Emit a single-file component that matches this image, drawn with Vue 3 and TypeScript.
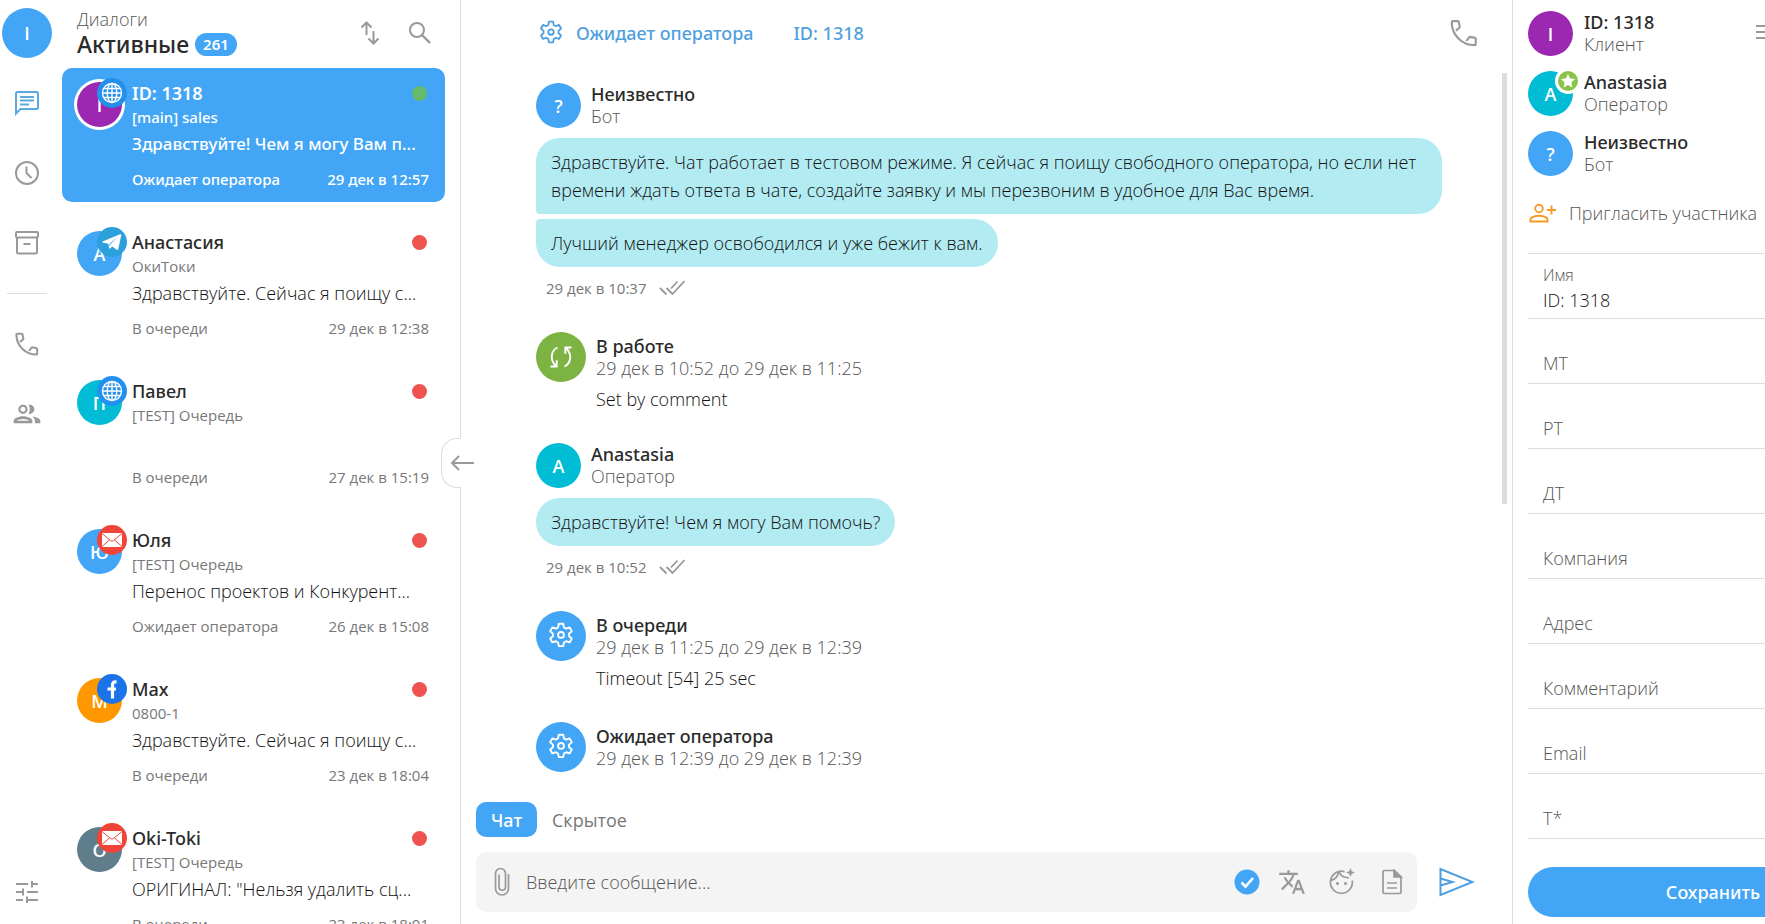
<script setup lang="ts">
import { ref } from 'vue'

type Channel = 'web' | 'telegram' | 'mail' | 'facebook'

interface Dialog {
  id: number
  name: string
  letter: string
  color: string
  channel: Channel
  queue: string
  message: string
  status: string
  time: string
  online?: boolean
}

const dialogs: Dialog[] = [
  { id: 1, name: 'ID: 1318', letter: 'I', color: '#9c27b0', channel: 'web', queue: '[main] sales', message: 'Здравствуйте! Чем я могу Вам п...', status: 'Ожидает оператора', time: '29 дек в 12:57', online: true },
  { id: 2, name: 'Анастасия', letter: 'А', color: '#42a5f5', channel: 'telegram', queue: 'ОкиТоки', message: 'Здравствуйте. Сейчас я поищу с...', status: 'В очереди', time: '29 дек в 12:38' },
  { id: 3, name: 'Павел', letter: 'П', color: '#00bcd4', channel: 'web', queue: '[TEST] Очередь', message: '', status: 'В очереди', time: '27 дек в 15:19' },
  { id: 4, name: 'Юля', letter: 'Ю', color: '#42a5f5', channel: 'mail', queue: '[TEST] Очередь', message: 'Перенос проектов и Конкурент...', status: 'Ожидает оператора', time: '26 дек в 15:08' },
  { id: 5, name: 'Max', letter: 'M', color: '#ff9800', channel: 'facebook', queue: '0800-1', message: 'Здравствуйте. Сейчас я поищу с...', status: 'В очереди', time: '23 дек в 18:04' },
  { id: 6, name: 'Oki-Toki', letter: 'O', color: '#607d8b', channel: 'mail', queue: '[TEST] Очередь', message: 'ОРИГИНАЛ: "Нельзя удалить сц...', status: 'В очереди', time: '23 дек в 18:01' },
]

interface Talk {
  kind: 'talk'
  name: string
  role: string
  letter: string
  color: string
  texts: string[]
  time: string
}

interface Status {
  kind: 'status'
  name: string
  period: string
  comment?: string
  working?: boolean
}

const feed: (Talk | Status)[] = [
  {
    kind: 'talk', name: 'Неизвестно', role: 'Бот', letter: '?', color: '#42a5f5', time: '29 дек в 10:37',
    texts: [
      'Здравствуйте. Чат работает в тестовом режиме. Я сейчас я поищу свободного оператора, но если нет времени ждать ответа в чате, создайте заявку и мы перезвоним в удобное для Вас время.',
      'Лучший менеджер освободился и уже бежит к вам.',
    ],
  },
  { kind: 'status', name: 'В работе', period: '29 дек в 10:52 до 29 дек в 11:25', comment: 'Set by comment', working: true },
  { kind: 'talk', name: 'Anastasia', role: 'Оператор', letter: 'A', color: '#00bcd4', time: '29 дек в 10:52', texts: ['Здравствуйте! Чем я могу Вам помочь?'] },
  { kind: 'status', name: 'В очереди', period: '29 дек в 11:25 до 29 дек в 12:39', comment: 'Timeout [54] 25 sec' },
  { kind: 'status', name: 'Ожидает оператора', period: '29 дек в 12:39 до 29 дек в 12:39' },
]

const members = [
  { name: 'ID: 1318', role: 'Клиент', letter: 'I', color: '#9c27b0', star: false },
  { name: 'Anastasia', role: 'Оператор', letter: 'A', color: '#00bcd4', star: true },
  { name: 'Неизвестно', role: 'Бот', letter: '?', color: '#42a5f5', star: false },
]

const fields = ref([
  { key: 'name', label: 'Имя', value: 'ID: 1318' },
  { key: 'mt', label: 'МТ', value: '' },
  { key: 'rt', label: 'РТ', value: '' },
  { key: 'dt', label: 'ДТ', value: '' },
  { key: 'company', label: 'Компания', value: '' },
  { key: 'address', label: 'Адрес', value: '' },
  { key: 'comment', label: 'Комментарий', value: '' },
  { key: 'email', label: 'Email', value: '' },
  { key: 't', label: 'Т*', value: '' },
])

const activeId = ref(1)
const draft = ref('')
const mode = ref<'chat' | 'hidden'>('chat')

const gearPath =
  'M10.1 1.5h3.8l.6 3.1 1.9 1.1 3-1.1 1.9 3.3-2.4 2.1v2.2l2.4 2-1.9 3.3-3-1-1.9 1.1-.6 3.1h-3.8l-.6-3.1-1.9-1.1-3 1-1.9-3.3 2.4-2V10L2.7 7.900l1.900-3.300 3 1.100 1.900-1.100z'
const phonePath =
  'M5.500 10.100 8.300 7.800c.3-.3.4-.5.3-.8L7.800 3.100c-.1-.4-.4-.6-.7-.6H3c-.5 0-.8.4-.8.8 0 10.200 8.200 18.400 18.400 18.400.5 0 .8-.3.8-.8v-4.200c0-.4-.2-.7-.6-.8l-3.800-.8c-.3 0-.6.1-.8.3l-2.300 2.900'
</script>

<template>
  <div class="app">
    <nav class="rail" aria-label="Разделы">
      <button class="me" aria-label="Профиль">I</button>
      <button class="rail-btn on" aria-label="Диалоги">
        <svg width="26" height="26" viewBox="0 0 26 26" fill="none" stroke="currentColor" stroke-width="2">
          <path d="M2 23.500V3.500A1.500 1.500 0 0 1 3.500 2h19A1.500 1.500 0 0 1 24 3.500v14a1.500 1.500 0 0 1-1.500 1.500H6.500z" />
          <path d="M6 7h14M6 10.500h14M6 14.500h9" stroke-width="1.800" />
        </svg>
      </button>
      <button class="rail-btn" aria-label="История">
        <svg width="26" height="26" viewBox="0 0 26 26" fill="none" stroke="currentColor" stroke-width="2">
          <circle cx="13" cy="13" r="11" /><path d="M12.500 6.500v6.500l5 5" />
        </svg>
      </button>
      <button class="rail-btn" aria-label="Архив">
        <svg width="26" height="26" viewBox="0 0 26 26" fill="none" stroke="currentColor" stroke-width="2">
          <rect x="2" y="2" width="22" height="5.500" rx="1" /><path d="M3 7.500V22a1.500 1.500 0 0 0 1.500 1.500h17A1.500 1.500 0 0 0 23 22V7.500M9.500 14h7" />
        </svg>
      </button>
      <hr class="rail-line" />
      <button class="rail-btn" aria-label="Звонки">
        <svg width="26" height="26" viewBox="0 0 24 24" fill="none" stroke="currentColor" stroke-width="1.900"><path :d="phonePath" /></svg>
      </button>
      <button class="rail-btn" aria-label="Контакты">
        <svg width="32" height="32" viewBox="0 0 24 24" fill="currentColor">
          <path d="M9 13.750c-2.340 0-7 1.170-7 3.500V19h14v-1.750c0-2.330-4.660-3.500-7-3.500zM4.340 17c.84-.58 2.870-1.250 4.660-1.250s3.820.67 4.660 1.250H4.340zM9 12c1.930 0 3.500-1.570 3.500-3.500S10.930 5 9 5 5.500 6.570 5.500 8.500 7.070 12 9 12zm0-5.400c1 0 1.900.9 1.900 1.900S10 10.400 9 10.400 7.100 9.500 7.100 8.500 8 6.600 9 6.600zm7.040 7.210c1.160.84 1.960 1.960 1.960 3.440V19h4v-1.750c0-2.020-3.500-3.170-5.960-3.440zM14 12c1.930 0 3.500-1.570 3.500-3.500S15.930 5 14 5c-.34 0-.64.03-.9.150.63.89 1 2.180 1 3.350s-.37 2.460-1 3.350c.26.120.56.150.9.150z" />
        </svg>
      </button>
      <button class="rail-btn last" aria-label="Настройки">
        <svg width="24" height="24" viewBox="0 0 24 24" fill="none" stroke="currentColor" stroke-width="2">
          <path d="M1 4h12M17 1v6.500M17 4h6M1 12h7M8 8.500V15.500M12 12h11M1 20h7M12 16.500V23M12 20h11" />
        </svg>
      </button>
    </nav>

    <section class="list">
      <header class="list-head">
        <div class="list-title">
          <p>Диалоги</p>
          <h1>Активные <span class="count">261</span></h1>
        </div>
        <button class="tool" aria-label="Сортировка">
          <svg width="20" height="26" viewBox="0 0 20 26" fill="none" stroke="currentColor" stroke-width="2">
            <path d="M6.500 15V3M1.500 7.500l5-5 5 5M13.500 11v12M8.500 18.500l5 5 5-5" />
          </svg>
        </button>
        <button class="tool" aria-label="Поиск">
          <svg width="24" height="24" viewBox="0 0 24 24" fill="none" stroke="currentColor" stroke-width="2">
            <circle cx="9" cy="9" r="7" /><path d="m14 14 8 8" stroke-width="2.400" />
          </svg>
        </button>
      </header>

      <ul class="dialogs">
        <li v-for="d in dialogs" :key="d.id">
          <button class="dialog" :class="{ active: d.id === activeId }" @click="activeId = d.id">
            <span class="avatar" :style="{ background: d.color }">
              {{ d.letter }}
              <span class="badge" :class="d.channel">
                <svg v-if="d.channel === 'web'" width="22" height="22" viewBox="0 0 22 22" fill="none" stroke="#fff" stroke-width="1.400">
                  <circle cx="11" cy="11" r="9.500" /><ellipse cx="11" cy="11" rx="4.800" ry="9.500" /><path d="M11 1.500v19M1.500 11h19M3 6.500h16M3 15.500h16" />
                </svg>
                <svg v-else-if="d.channel === 'telegram'" width="22" height="22" viewBox="0 0 22 22" fill="#fff">
                  <path d="M1.500 10.600 19 3.300c.9-.3 1.400.2 1.200 1.200L17.300 18c-.2 1-.8 1.200-1.600.7l-4.500-3.300-2.200 2.100c-.4.4-.8.3-.8-.2l-.8-4.600-5.700-1.200c-.9-.2-.9-.6-.2-.9zm7 2.100.3 3.200.7-2.800 7.500-7.700z" />
                </svg>
                <svg v-else-if="d.channel === 'mail'" width="20" height="14" viewBox="0 0 20 14">
                  <rect width="20" height="14" fill="#fff" /><path d="m0 .5 8.500 7q1.500 1.200 3 0l8.500-7M0 13.500 7.500 7M20 13.500 12.500 7" fill="none" stroke="#f04438" />
                </svg>
                <svg v-else width="22" height="22" viewBox="0 0 22 22" fill="none" stroke="#fff" stroke-width="3.200">
                  <path d="M15.500 3.800h-1.300a2.700 2.700 0 0 0-2.700 2.700V20.500M6.500 11h8.500" />
                </svg>
              </span>
            </span>
            <span class="dialog-body">
              <span class="dialog-row"><b class="name">{{ d.name }}</b><i class="dot" :class="{ online: d.online }"></i></span>
              <span class="queue">{{ d.queue }}</span>
              <span class="preview">{{ d.message }}</span>
              <span class="dialog-row meta"><span>{{ d.status }}</span><span>{{ d.time }}</span></span>
            </span>
          </button>
        </li>
      </ul>
    </section>

    <main class="chat">
      <button class="collapse" aria-label="Свернуть список">
        <svg width="24" height="16" viewBox="0 0 24 16" fill="none" stroke="currentColor" stroke-width="2"><path d="M24 8H2M9 1 2 8l7 7" /></svg>
      </button>

      <header class="chat-head">
        <svg width="26" height="26" viewBox="0 0 24 24" fill="none" stroke="currentColor" stroke-width="1.700" stroke-linejoin="round">
          <path :d="gearPath" /><circle cx="12" cy="11.100" r="2.500" />
        </svg>
        <span class="chat-status">Ожидает оператора</span>
        <span>ID: 1318</span>
        <button class="tool call" aria-label="Позвонить">
          <svg width="30" height="30" viewBox="0 0 24 24" fill="none" stroke="currentColor" stroke-width="1.700"><path :d="phonePath" /></svg>
        </button>
      </header>

      <div class="feed-wrap">
        <div class="feed">
          <template v-for="(item, i) in feed" :key="i">
            <article v-if="item.kind === 'talk'">
              <div class="person">
                <span class="avatar" :style="{ background: item.color }">{{ item.letter }}</span>
                <div><b class="name">{{ item.name }}</b><span class="role">{{ item.role }}</span></div>
              </div>
              <div class="bubbles"><p v-for="t in item.texts" :key="t" class="bubble">{{ t }}</p></div>
              <p class="sent">
                {{ item.time }}
                <svg width="26" height="16" viewBox="0 0 26 16" fill="none" stroke="currentColor" stroke-width="1.800">
                  <path d="m1 8 6.500 6.500M7.500 8l6 6L25.500 1M12 8.500 18.500 1.500" />
                </svg>
              </p>
            </article>
            <article v-else class="status">
              <span class="status-icon" :class="{ working: item.working }">
                <svg v-if="item.working" width="24" height="24" viewBox="0 0 24 24" fill="none" stroke="#fff" stroke-width="1.900">
                  <path d="M8.500 2.500C1.500 6 .8 15 7 21M1.500 21.500h6.200v-6.200M15.500 21.500c7-3.500 7.700-12.500 1.500-18.500M22.500 2.500h-6.200v6.200" />
                </svg>
                <svg v-else width="28" height="28" viewBox="0 0 24 24" fill="none" stroke="#fff" stroke-width="1.600" stroke-linejoin="round">
                  <path :d="gearPath" /><circle cx="12" cy="11.100" r="2.500" />
                </svg>
              </span>
              <div class="status-text">
                <b class="name">{{ item.name }}</b>
                <span class="role">{{ item.period }}</span>
                <p v-if="item.comment">{{ item.comment }}</p>
              </div>
            </article>
          </template>
        </div>
        <i class="thumb"></i>
      </div>

      <div class="tabs">
        <button :class="{ on: mode === 'chat' }" @click="mode = 'chat'">Чат</button>
        <button :class="{ on: mode === 'hidden' }" @click="mode = 'hidden'">Скрытое</button>
      </div>

      <form class="composer" @submit.prevent>
        <div class="box">
          <button type="button" class="tool" aria-label="Прикрепить файл">
            <svg width="16" height="30" viewBox="0 0 16 30" fill="none" stroke="currentColor" stroke-width="1.700">
              <path d="M14.500 7v14.500a6.500 6.500 0 0 1-13 0V6.500a5 5 0 0 1 10 0V20a3 3 0 0 1-6.500 0V7.500" />
            </svg>
          </button>
          <input v-model="draft" type="text" placeholder="Введите сообщение..." aria-label="Введите сообщение" />
          <button type="button" class="tool check" aria-label="Проверка">
            <svg width="26" height="26" viewBox="0 0 26 26"><circle cx="13" cy="13" r="12.500" fill="#42a5f5" /><path d="m7.500 13.500 4 4 7.500-8.500" fill="none" stroke="#fff" stroke-width="2.600" /></svg>
          </button>
          <button type="button" class="tool" aria-label="Перевод">
            <svg width="28" height="28" viewBox="0 0 24 24" fill="currentColor">
              <path d="M12.870 15.070l-2.540-2.510.03-.03c1.740-1.940 2.980-4.170 3.710-6.530H17V4h-7V2H8v2H1v1.990h11.170C11.500 7.920 10.440 9.750 9 11.350 8.070 10.320 7.300 9.190 6.690 8h-2c.73 1.630 1.730 3.170 2.980 4.560l-5.090 5.020L4 19l5-5 3.110 3.110.76-2.040zM18.500 10h-2L12 22h2l1.120-3h4.750L21 22h2l-4.500-12zm-2.620 7l1.620-4.330L19.120 17h-3.240z" />
            </svg>
          </button>
          <button type="button" class="tool" aria-label="Эмодзи">
            <svg width="28" height="28" viewBox="0 0 28 28" fill="none" stroke="currentColor" stroke-width="1.700">
              <path d="M16.500 3.700a11 11 0 1 0 7.800 9M11 3.500c1.500 4 5.500 6.500 10 6.200M3 12.500c4-1 7-4.500 8-9" />
              <circle cx="9.500" cy="15.500" r="1.500" fill="currentColor" stroke="none" /><circle cx="17.500" cy="15.500" r="1.500" fill="currentColor" stroke="none" />
              <path d="m22.500 0 1.300 3.200L27 4.500l-3.200 1.300L22.500 9l-1.300-3.200L18 4.500l3.200-1.300z" fill="currentColor" stroke="none" />
            </svg>
          </button>
          <button type="button" class="tool" aria-label="Шаблоны">
            <svg width="28" height="26" viewBox="-4 0 28 26" fill="none" stroke="currentColor" stroke-width="1.700">
              <path d="M12.500 1.500h-10A1.500 1.500 0 0 0 1 3v20a1.500 1.500 0 0 0 1.500 1.500h15A1.500 1.500 0 0 0 19 23V8z" /><path d="M12 1.500V8h7z" fill="currentColor" /><path d="M5 14h10M5 19h10" />
            </svg>
          </button>
        </div>
        <button class="send" aria-label="Отправить">
          <svg width="36" height="30" viewBox="0 0 36 30" fill="none" stroke="currentColor" stroke-width="2"><path d="M1.500 2v26l32-13zM1.500 11.500l12 3.500-12 3.500" /></svg>
        </button>
      </form>
    </main>

    <aside class="side">
      <div class="side-inner">
        <div class="members">
          <div v-for="m in members" :key="m.name" class="person">
            <span class="avatar" :style="{ background: m.color }">
              {{ m.letter }}
              <span v-if="m.star" class="star">
                <svg width="16" height="16" viewBox="0 0 16 16" fill="#fff"><path d="m8 .8 2.100 4.800 5.100.5-3.900 3.400 1.200 5.100L8 11.900l-4.500 2.700 1.200-5.100L.8 6.100l5.100-.5z" /></svg>
              </span>
            </span>
            <div><b class="name">{{ m.name }}</b><span class="role">{{ m.role }}</span></div>
          </div>
          <button class="tool menu" aria-label="Меню">
            <svg width="24" height="16" viewBox="0 0 24 16" fill="none" stroke="currentColor" stroke-width="2"><path d="M0 2h24M0 8h24M0 14h24" /></svg>
          </button>
        </div>
        <button class="invite">
          <svg width="28" height="20" viewBox="0 0 28 20" fill="none" stroke="#f59a23" stroke-width="1.900">
            <circle cx="10" cy="5.500" r="3.800" /><path d="M1.500 18.500v-2c0-2.200 4.500-3.700 8.500-3.700s8.500 1.500 8.500 3.700v2zM22.500 2.500v9M18 7h9" />
          </svg>
          Пригласить участника
        </button>
        <form class="card" @submit.prevent>
          <div v-for="f in fields" :key="f.key" class="field" :class="{ filled: f.value }">
            <label :for="f.key">{{ f.label }}</label>
            <input :id="f.key" v-model="f.value" type="text" />
          </div>
          <button class="save">Сохранить</button>
        </form>
      </div>
    </aside>
  </div>
</template>

<style>
body {
  margin: 0;
  overflow: hidden;
}
</style>

<style scoped>
.app {
  display: grid;
  grid-template-columns: 54px 406px minmax(0, 1fr) 253px;
  height: 100vh;
  overflow: hidden;
  background: #fff;
  color: #111;
  font: 300 18px/24px "Open Sans", "Noto Sans", sans-serif;
}
.app *,
.app *::before {
  box-sizing: border-box;
}
button {
  padding: 0;
  border: 0;
  background: none;
  color: inherit;
  font: inherit;
  cursor: pointer;
}
input {
  min-width: 0;
  padding: 0;
  border: 0;
  outline: 0;
  background: none;
  color: inherit;
  font: inherit;
}
p,
h1,
ul {
  margin: 0;
  padding: 0;
}
svg {
  display: block;
  flex: none;
}
.name,
.chat-head,
.save,
h1 {
  font-family: "Noto Sans", "Open Sans", sans-serif;
  font-weight: 500;
}
.name {
  color: #2b2b2b;
}
.role {
  color: #555;
}

.rail {
  display: flex;
  flex-direction: column;
  align-items: center;
  padding: 8px 0 16px;
  color: #999;
}
.me {
  flex: none;
  width: 50px;
  height: 50px;
  margin-bottom: 20px;
  border-radius: 50%;
  background: #42a5f5;
  color: #fff;
  font-weight: 600;
}
.rail-btn {
  display: grid;
  place-items: center;
  flex: none;
  width: 50px;
  height: 50px;
  margin-bottom: 20px;
}
.rail-btn.on {
  color: #5aa9e0;
}
.rail-btn.last {
  margin: auto 0 0;
  height: 32px;
}
.rail-line {
  width: 40px;
  margin: 5px 0 25px;
  border: 0;
  border-top: 1px solid #ddd;
}

.list {
  display: flex;
  flex-direction: column;
  min-height: 0;
  overflow: hidden;
  padding: 0 15px 0 8px;
}
.list-head {
  display: flex;
  align-items: flex-start;
  flex: none;
  gap: 28px;
  height: 68px;
  padding: 8px 13px 0 15px;
}
.list-title {
  flex: 1;
  color: #555;
}
.list-title p {
  line-height: 22px;
}
.list-head .tool {
  display: grid;
  place-items: center;
  height: 50px;
}
h1 {
  display: flex;
  align-items: center;
  gap: 6px;
  color: #2b2b2b;
  font-size: 23px;
  line-height: 28px;
}
.count {
  padding: 0 8px;
  border-radius: 12px;
  background: #42a5f5;
  color: #fff;
  font-size: 15px;
  font-weight: 600;
  line-height: 23px;
}
.tool {
  color: #999;
}
.dialogs {
  display: flex;
  flex-direction: column;
  gap: 15px;
  list-style: none;
}
.dialog {
  display: flex;
  gap: 10px;
  width: 100%;
  padding: 13px 16px 11px 15px;
  border-radius: 10px;
  text-align: left;
}
.dialog .avatar {
  margin-top: 1px;
}
.avatar {
  position: relative;
  display: grid;
  place-items: center;
  flex: none;
  width: 45px;
  height: 45px;
  border-radius: 50%;
  color: #fff;
  font-weight: 600;
}
.badge {
  position: absolute;
  top: -4px;
  right: -5px;
  display: grid;
  place-items: center;
  width: 30px;
  height: 30px;
  border-radius: 50%;
}
.badge.web {
  background: #2490ee;
}
.badge.telegram {
  background: #2ca0da;
}
.badge.mail {
  background: #f04438;
}
.badge.facebook {
  background: #1a73e8;
}
.dialog-body {
  display: flex;
  flex: 1;
  flex-direction: column;
  min-width: 0;
}
.dialog-row {
  display: flex;
  align-items: center;
  justify-content: space-between;
}
.dot {
  width: 15px;
  height: 15px;
  margin-right: 2px;
  border-radius: 50%;
  background: #ef5350;
}
.dot.online {
  background: #66bb6a;
}
.queue,
.meta {
  color: #777;
  font-size: 15px;
  font-weight: 400;
}
.preview {
  overflow: hidden;
  height: 24px;
  margin: 3px 0 11px;
  white-space: nowrap;
}
.dialog.active {
  background: #42a5f5;
  color: #fff;
}
.active .preview {
  font-family: "Noto Sans", "Open Sans", sans-serif;
  font-size: 17px;
  font-weight: 500;
}
.active .name {
  color: #fff;
  font-weight: 600;
}
.active .queue,
.active .meta {
  color: #fff;
  font-family: "Noto Sans", "Open Sans", sans-serif;
  font-weight: 500;
}
.active .avatar {
  box-shadow: 0 0 0 3px #fff;
}

.chat {
  position: relative;
  display: flex;
  flex-direction: column;
  min-width: 0;
  min-height: 0;
  border-left: 1px solid #ddd;
}
.collapse {
  position: absolute;
  top: 438px;
  left: -20px;
  display: grid;
  place-items: center end;
  width: 33px;
  height: 50px;
  background: linear-gradient(#fff, #fff) right / 14px 50px no-repeat;
  color: #999;
}
.collapse::before {
  content: "";
  position: absolute;
  inset: 0 13px 0 0;
  border: 1px solid #ddd;
  border-right: 0;
  border-radius: 16px 0 0 16px;
  background: #fff;
}
.collapse svg {
  position: relative;
}
.chat-head {
  display: flex;
  align-items: center;
  flex: none;
  height: 65px;
  padding: 0 33px 0 77px;
  color: #4f9fe0;
}
.chat-status {
  margin: 0 40px 0 12px;
}
.call {
  margin-left: auto;
}
.feed-wrap {
  display: flex;
  justify-content: space-between;
  flex: 1;
  min-height: 0;
  margin-top: 8px;
  padding-right: 5px;
  overflow: hidden;
}
.feed {
  display: flex;
  flex: 1;
  flex-direction: column;
  gap: 32px;
  min-width: 0;
  padding: 10px 60px 0 75px;
}
.thumb {
  flex: none;
  width: 5px;
  height: 60%;
  background: #ddd;
}
.person {
  display: flex;
  gap: 10px;
  line-height: 22px;
}
.person .name,
.person .role,
.status .name,
.status .role {
  display: block;
}
.bubbles {
  display: flex;
  flex-direction: column;
  align-items: flex-start;
  gap: 5px;
  margin: 10px 0 9px;
}
.bubble {
  padding: 10px 15px;
  border-radius: 24px;
  background: #b2ebf2;
  line-height: 28px;
}
.bubble:first-child:not(:last-child) {
  border-bottom-left-radius: 4px;
}
.bubble:last-child:not(:first-child) {
  border-top-left-radius: 4px;
}
.sent {
  display: flex;
  align-items: center;
  gap: 12px;
  padding-left: 10px;
  color: #777;
  font-size: 15px;
  font-weight: 400;
}
.sent svg {
  color: #999;
}
.status {
  display: flex;
  gap: 10px;
}
.status-icon {
  display: grid;
  place-items: center;
  flex: none;
  width: 50px;
  height: 50px;
  border-radius: 50%;
  background: #42a5f5;
}
.status-icon.working {
  background: #7cb342;
}
.status-text {
  padding-top: 3px;
  line-height: 22px;
}
.status-text p {
  margin: 9px 0 1px;
}
.tabs {
  display: flex;
  flex: none;
  padding: 10px 0 15px 15px;
  color: #777;
}
.tabs button {
  height: 35px;
  padding: 0 15px;
  border-radius: 10px;
  font-weight: 400;
}
.tabs .on {
  background: #42a5f5;
  color: #fff;
  font-family: "Noto Sans", "Open Sans", sans-serif;
  font-weight: 500;
}
.composer {
  display: flex;
  align-items: center;
  flex: none;
  gap: 22px;
  padding: 0 37px 12px 15px;
}
.box {
  display: flex;
  align-items: center;
  flex: 1;
  gap: 22px;
  height: 60px;
  padding: 0 11px 0 18px;
  border-radius: 10px;
  background: #f4f4f4;
}
.box input {
  flex: 1;
  height: 40px;
  margin-left: -6px;
}
.box input::placeholder {
  color: #555;
  opacity: 1;
}
.check {
  margin-right: -4px;
}
.send {
  color: #4f9fe0;
}

.side {
  min-width: 0;
  overflow: hidden;
  border-left: 1px solid #ddd;
}
.side-inner {
  width: 400px;
  padding: 11px 15px 0;
}
.members {
  position: relative;
  display: flex;
  flex-direction: column;
  gap: 15px;
}
.members .person {
  gap: 11px;
}
.menu {
  position: absolute;
  top: 13px;
  left: 228px;
}
.star {
  position: absolute;
  top: -3px;
  right: -8px;
  display: grid;
  place-items: center;
  width: 26px;
  height: 26px;
  border: 3px solid #fff;
  border-radius: 50%;
  background: #8bc34a;
}
.invite {
  display: flex;
  align-items: center;
  gap: 12px;
  height: 48px;
  margin-top: 13px;
  padding-left: 1px;
  color: #555;
}
.card {
  margin-top: 16px;
  border-top: 1px solid #ddd;
}
.field {
  position: relative;
  display: flex;
  flex-direction: column;
  height: 65px;
  padding: 9px 15px 0;
  border-bottom: 1px solid #ddd;
}
.field label {
  height: 24px;
  color: #555;
  font-size: 16px;
}
.field input {
  height: 26px;
}
.field:not(.filled) label {
  position: absolute;
  top: 32px;
  font-size: 18px;
  pointer-events: none;
}
.field:not(.filled) input {
  margin-top: 24px;
}
.save {
  width: 100%;
  height: 50px;
  margin-top: 28px;
  border-radius: 25px;
  background: #42a5f5;
  color: #fff;
}
</style>
